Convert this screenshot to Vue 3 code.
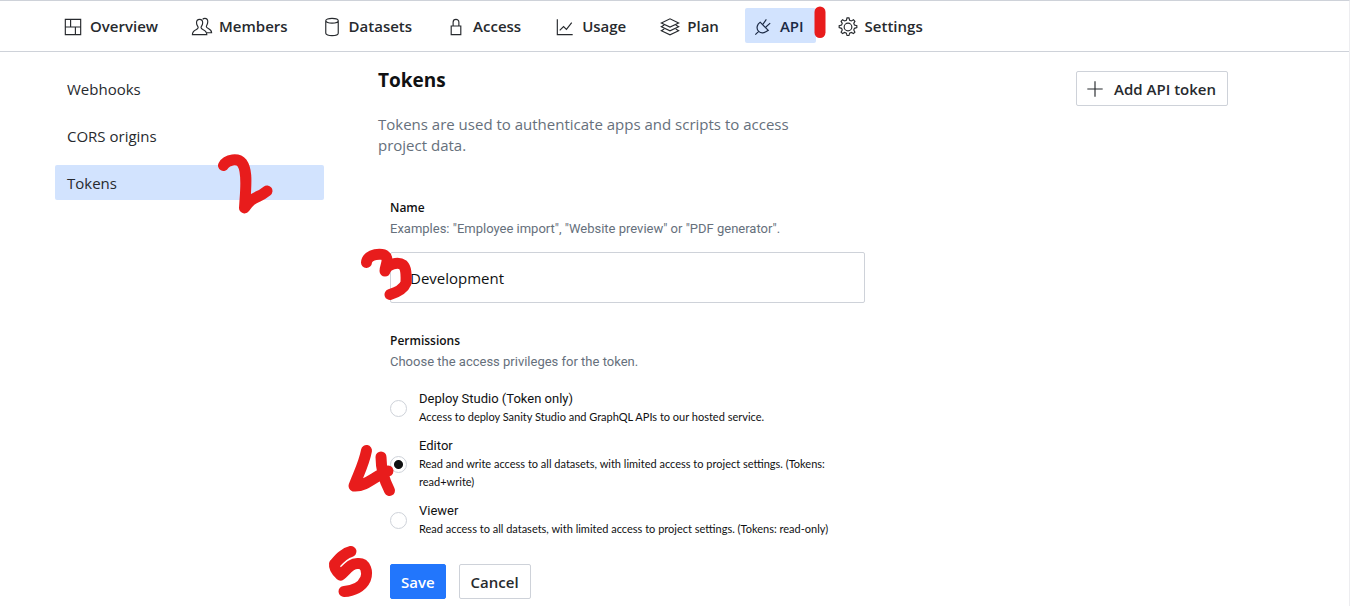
<script setup>
import { ref } from 'vue'

const tabs = [
  { label: 'Overview', icon: ['M4.5 4.5h16v16h-16zM10 4.5v8M4.5 12.5h16M15 12.5v8'] },
  {
    label: 'Members',
    icon: [
      'M17.5 18.5h5c0-5-5.500-4-5.500-6.500 0-1.200 1.500-2 1.500-5 0-2-1-3.500-3-3.500-1 0-1.800.3-2.300 1',
      'M2.500 20.500c0-6 6-4.500 6-7.500 0-1.200-1.700-2-1.700-5 0-2 1.200-3.500 3.200-3.500s3.200 1.500 3.200 3.500c0 3-1.700 3.800-1.700 5 0 3 6 1.500 6 7.500z',
    ],
  },
  {
    label: 'Datasets',
    icon: ['M19 6v13c0 1.400-2.900 2.500-6.500 2.500S6 20.400 6 19V6M19 6c0 1.400-2.900 2.500-6.500 2.500S6 7.400 6 6s2.900-2.500 6.500-2.500S19 4.600 19 6z'],
  },
  { label: 'Access', icon: ['M7.500 11.500h10v9h-10zM9.500 11.500v-4a3 3 0 0 1 6 0v4'] },
  { label: 'Usage', icon: ['M4.500 4.500v16h16M7 16l4-4 3 3 5.500-7'] },
  {
    label: 'Plan',
    icon: [
      'M3.500 8.300l9-4.300 9 4.300-9 4.200z',
      'M6.500 10.500l-3 1.700 9 4.300 9-4.300-3-1.700M6.500 14.700l-3 1.700 9 4.300 9-4.300-3-1.700',
    ],
  },
  {
    label: 'API',
    icon: ['M4.500 20.500l3.500-3.500M9.500 7.500l8.500 8.500-2.500 1.500c-2.500 1.500-5.500 1.500-7.500-.5s-2-5-.5-7.500zM12.500 9.500l3.500-5M15.500 12.500l4.500-4'],
    active: true,
  },
  {
    label: 'Settings',
    icon: [
      'M12.500 8.500a4 4 0 1 1 0 8 4 4 0 0 1 0-8z',
      'M10.800 5.500l.7-2.500h2l.7 2.500 1.800.7 2.200-1.200 1.500 1.500-1.200 2.200.7 1.800 2.500.7v2l-2.500.7-.7 1.800 1.200 2.200-1.500 1.500-2.200-1.200-1.800.7-.7 2.500h-2l-.7-2.500-1.800-.7-2.200 1.200-1.500-1.500 1.200-2.200-.7-1.800-2.500-.7v-2l2.500-.7.7-1.800-1.200-2.200 1.500-1.500 2.200 1.200z',
    ],
  },
]

const sections = [
  { label: 'Webhooks' },
  { label: 'CORS origins' },
  { label: 'Tokens', active: true },
]

const roles = [
  {
    id: 'deploy',
    title: 'Deploy Studio (Token only)',
    text: 'Access to deploy Sanity Studio and GraphQL APIs to our hosted service.',
  },
  {
    id: 'editor',
    title: 'Editor',
    text: 'Read and write access to all datasets, with limited access to project settings. (Tokens: read+write)',
  },
  {
    id: 'viewer',
    title: 'Viewer',
    text: 'Read access to all datasets, with limited access to project settings. (Tokens: read-only)',
  },
]

const name = ref('Development')
const role = ref('editor')

const marks = [
  'M820 12V32.500',
  'M223.500 165.500C227 159 238 158 242 163C247 170 246 182 245.500 193L244.500 208C250 200 253 199 258 196.500Q262 195 267 191',
  'M366.500 262.500C367 254 383 252 386 256.500C389 261 385 266 385 271C387 263 399 262 403 265C407 269 406 277 406 283C404 288 398 292 390 294.500',
  'M366.500 450.500C364 464 358 475 354 486C366 487 376 475 388 471M381 457C381 468 384 480 389.500 490.500',
  'M351 551.500C344 553 339 559 334.500 564C334 568 337 572 340.500 575C346 571 350 563 358 563.500C366 563 368 572 365.500 579C362 587 353 591 344 591.500',
]
</script>

<template>
  <div class="page">
    <header class="topbar">
      <nav class="tabs" aria-label="Project">
        <a v-for="tab in tabs" :key="tab.label" href="#" class="tab" :class="{ active: tab.active }">
          <svg class="icon" viewBox="0 0 25 25" aria-hidden="true">
            <path v-for="d in tab.icon" :key="d" :d="d" />
          </svg>
          <span>{{ tab.label }}</span>
        </a>
      </nav>
    </header>

    <div class="layout">
      <nav class="sidebar" aria-label="API">
        <a v-for="s in sections" :key="s.label" href="#" class="side-link" :class="{ active: s.active }">{{ s.label }}</a>
      </nav>

      <main class="main">
        <div class="heading">
          <div class="intro">
            <h1>Tokens</h1>
            <p>Tokens are used to authenticate apps and scripts to access project data.</p>
          </div>
          <button type="button" class="btn add">
            <svg class="icon" viewBox="0 0 25 25" aria-hidden="true"><path d="M12.500 4.500v16M4.500 12.500h16" /></svg>
            <span>Add API token</span>
          </button>
        </div>

        <form class="form" @submit.prevent>
          <div class="field">
            <label class="label" for="token-name">Name</label>
            <p id="name-hint" class="hint">Examples: "Employee import", "Website preview" or "PDF generator".</p>
            <input id="token-name" v-model="name" class="text-input" type="text" aria-describedby="name-hint" />
          </div>

          <fieldset class="permissions">
            <legend class="label">Permissions</legend>
            <p class="hint">Choose the access privileges for the token.</p>
            <div class="roles">
              <label v-for="r in roles" :key="r.id" class="role" :for="r.id">
                <input :id="r.id" v-model="role" class="radio" type="radio" name="role" :value="r.id" />
                <span class="role-body">
                  <span class="role-title">{{ r.title }}</span>
                  <span class="role-text">{{ r.text }}</span>
                </span>
              </label>
            </div>
          </fieldset>

          <div class="actions">
            <button type="submit" class="btn save">Save</button>
            <button type="button" class="btn">Cancel</button>
          </div>
        </form>
      </main>
    </div>

    <svg class="marks" width="1350" height="606" viewBox="0 0 1350 606" aria-hidden="true">
      <path v-for="d in marks" :key="d" :d="d" />
    </svg>
  </div>
</template>

<style>
body {
  margin: 0;
  background: #fff;
}
</style>

<style scoped>
.page {
  position: relative;
  box-sizing: border-box;
  min-height: 100vh;
  overflow: hidden;
  border-top: 1px solid #ced2d9;
  border-right: 1px solid #ededf0;
  color: #101112;
  font-family: "Open Sans", "Noto Sans", sans-serif;
  font-size: 15px;
  line-height: 21px;
}

.topbar {
  padding: 7px 55px 8px;
  border-bottom: 1px solid #ced2d9;
}

.tabs {
  display: flex;
  gap: 14px;
}

.tab {
  box-sizing: border-box;
  display: flex;
  align-items: center;
  gap: 5px;
  height: 35px;
  padding: 2px 12px 0 6px;
  border-radius: 2px;
  color: #272a2e;
  font-weight: 600;
  text-decoration: none;
  white-space: nowrap;
}

.active {
  background: #d2e3fe;
  color: #1b2a45;
}

.icon {
  flex: none;
  width: 24px;
  height: 24px;
  fill: none;
  stroke: currentColor;
  stroke-width: 1.2;
}

.layout {
  display: grid;
  grid-template-columns: 269fr 850fr;
  gap: 54px;
  padding: 19px 121px 0 55px;
}

.sidebar {
  display: flex;
  flex-direction: column;
  gap: 12px;
}

.side-link {
  padding: 8px 12px 6px;
  border-radius: 2px;
  color: #272a2e;
  text-decoration: none;
}

.heading {
  display: flex;
  align-items: flex-start;
  justify-content: space-between;
  gap: 24px;
}

.intro {
  max-width: 430px;
}

h1 {
  margin: 0 0 24px;
  font-size: 19px;
  line-height: 19px;
  font-weight: 700;
}

p {
  margin: 0;
}

.intro p {
  color: #66707c;
}

.btn {
  box-sizing: border-box;
  display: flex;
  align-items: center;
  height: 35px;
  padding: 1px 11px 0;
  border: 1px solid #ced2d9;
  border-radius: 2px;
  background: #fff;
  color: #272a2e;
  font: inherit;
  font-weight: 600;
  white-space: nowrap;
}

.add {
  gap: 7px;
  padding-left: 6px;
}

.save {
  padding: 1px 10px 0;
  border-color: #2276fc;
  background: #2276fc;
  color: #fff;
}

.form {
  max-width: 475px;
  padding: 41px 0 8px 12px;
}

.label {
  display: block;
  padding: 0;
  font-size: 12px;
  line-height: 21px;
  font-weight: 600;
}

.hint {
  color: #66707c;
  font-family: Roboto, "Open Sans", sans-serif;
  font-size: 13px;
  line-height: 21px;
}

.text-input {
  box-sizing: border-box;
  display: block;
  width: 100%;
  height: 51px;
  margin-top: 13px;
  padding: 0 19px;
  border: 1px solid #ced2d9;
  border-radius: 2px;
  background: #fff;
  color: #101112;
  font: inherit;
}

.permissions {
  min-width: 0;
  margin: 27px 0 0;
  padding: 0;
  border: 0;
}

.roles {
  display: flex;
  flex-direction: column;
  gap: 11px;
  margin-top: 18px;
  font-family: Roboto, "Open Sans", sans-serif;
}

.role {
  display: flex;
  align-items: center;
  gap: 12px;
}

.role-body {
  display: flex;
  flex-direction: column;
}

.radio {
  flex: none;
  box-sizing: border-box;
  width: 17px;
  height: 17px;
  margin: 0;
  border: 1px solid #ced2d9;
  border-radius: 50%;
  appearance: none;
  background: #fff;
}

.radio:checked {
  background: radial-gradient(circle, #101112 4px, #fff 5px);
}

.role-title {
  font-size: 13px;
  line-height: 18px;
}

.role-text {
  font-family: Lato, "Open Sans", sans-serif;
  font-size: 11px;
  line-height: 18px;
}

.actions {
  display: flex;
  gap: 13px;
  margin-top: 26px;
}

.marks {
  position: absolute;
  top: -1px;
  left: 0;
  fill: none;
  stroke: #e81c1c;
  stroke-width: 11;
  stroke-linecap: round;
  stroke-linejoin: round;
  pointer-events: none;
}
</style>
